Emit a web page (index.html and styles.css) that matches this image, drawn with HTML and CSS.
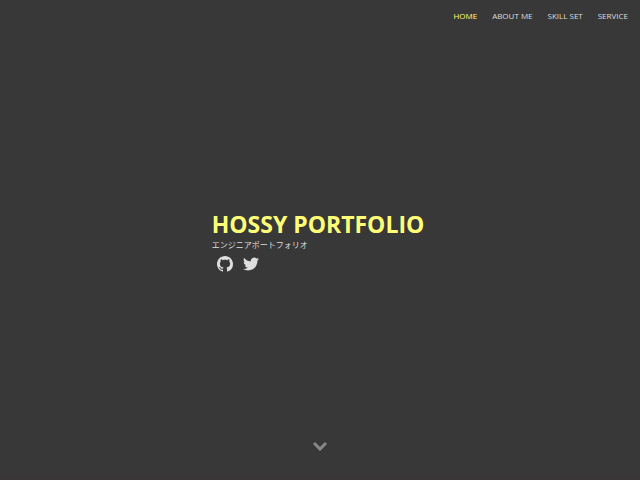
FILE: index.html
```html
<!DOCTYPE html>
<html lang="ja">
<head>
<meta charset="utf-8">
<meta name="viewport" content="width=device-width, initial-scale=1">
<title>HOSSY PORTFOLIO</title>
<link rel="stylesheet" href="styles.css">
</head>
<body>
<header>
  <nav class="nav">
    <a class="active" href="#home">HOME</a>
    <a href="#about">ABOUT ME</a>
    <a href="#skill">SKILL SET</a>
    <a href="#service">SERVICE</a>
  </nav>
</header>
<main class="hero" id="home">
  <div class="intro">
    <h1>HOSSY PORTFOLIO</h1>
    <p>エンジニアポートフォリオ</p>
    <div class="social">
      <a href="#github" aria-label="GitHub"><svg viewBox="0 0 16 16"><path d="M8 0C3.58 0 0 3.58 0 8c0 3.54 2.29 6.53 5.47 7.59.4.07.55-.17.55-.38 0-.19-.01-.82-.01-1.49-2.01.37-2.53-.49-2.69-.94-.09-.23-.48-.94-.82-1.13-.28-.15-.68-.52-.01-.53.63-.01 1.08.58 1.23.82.72 1.21 1.87.87 2.33.66.07-.52.28-.87.51-1.07-1.78-.2-3.64-.89-3.64-3.95 0-.87.31-1.59.82-2.15-.08-.2-.36-1.02.08-2.12 0 0 .67-.21 2.2.82.64-.18 1.32-.27 2-.27s1.36.09 2 .27c1.53-1.04 2.2-.82 2.2-.82.44 1.1.16 1.92.08 2.12.51.56.82 1.27.82 2.15 0 3.07-1.87 3.75-3.65 3.95.29.25.54.73.54 1.48 0 1.07-.01 1.93-.01 2.2 0 .21.15.46.55.38A8.01 8.01 0 0 0 16 8c0-4.42-3.58-8-8-8z"/></svg></a>
      <a href="#twitter" aria-label="Twitter"><svg viewBox="0 0 24 24"><path d="M23.95 4.57a10 10 0 0 1-2.82.77 4.96 4.96 0 0 0 2.16-2.72c-.95.55-2 .95-3.13 1.18a4.92 4.92 0 0 0-8.38 4.48C7.69 8.1 4.07 6.13 1.64 3.16a4.9 4.9 0 0 0-.67 2.48c0 1.71.87 3.21 2.19 4.1a4.9 4.9 0 0 1-2.23-.62v.06a4.92 4.92 0 0 0 3.95 4.83 5 5 0 0 1-2.21.08 4.94 4.94 0 0 0 4.6 3.42A9.87 9.87 0 0 1 0 19.54a13.99 13.99 0 0 0 7.55 2.21c9.05 0 14-7.5 14-13.98 0-.21 0-.42-.02-.63a9.94 9.94 0 0 0 2.42-2.57z"/></svg></a>
    </div>
  </div>
</main>
<footer class="scroll">
  <a href="#about" aria-label="Scroll down"><svg viewBox="0 0 16 10"><path d="M2 2l6 6 6-6"/></svg></a>
</footer>
</body>
</html>
```
FILE: styles.css
```css
* { box-sizing: border-box; }
body {
  margin: 0;
  min-height: 100vh;
  display: grid;
  grid-template-rows: 1fr auto 1fr;
  background: #383838;
  color: #dedede;
  font-family: "Open Sans", "Noto Sans CJK JP", sans-serif;
  font-size: 8px;
  line-height: 12px;
}
a { color: inherit; text-decoration: none; }
svg { display: block; }
.nav {
  display: flex;
  justify-content: flex-end;
  gap: 15px;
  padding: 10px 12px;
}
.nav .active { color: #ffff77; }
.hero { display: flex; justify-content: center; }
.intro { padding-right: 4px; }
h1 {
  margin: 0;
  color: #ffff77;
  font-size: 23px;
  line-height: 30px;
}
p { margin: 0; }
.social {
  display: flex;
  gap: 10px;
  padding: 5px 5px 0;
}
.social svg { width: 16px; height: 16px; fill: #dedede; }
.scroll {
  display: flex;
  justify-content: center;
  align-items: flex-end;
  padding-bottom: 26px;
  border-bottom: 3px solid #3a3337;
}
.scroll svg {
  width: 16px;
  height: 10px;
  fill: none;
  stroke: #888888;
  stroke-width: 3px;
}
```
